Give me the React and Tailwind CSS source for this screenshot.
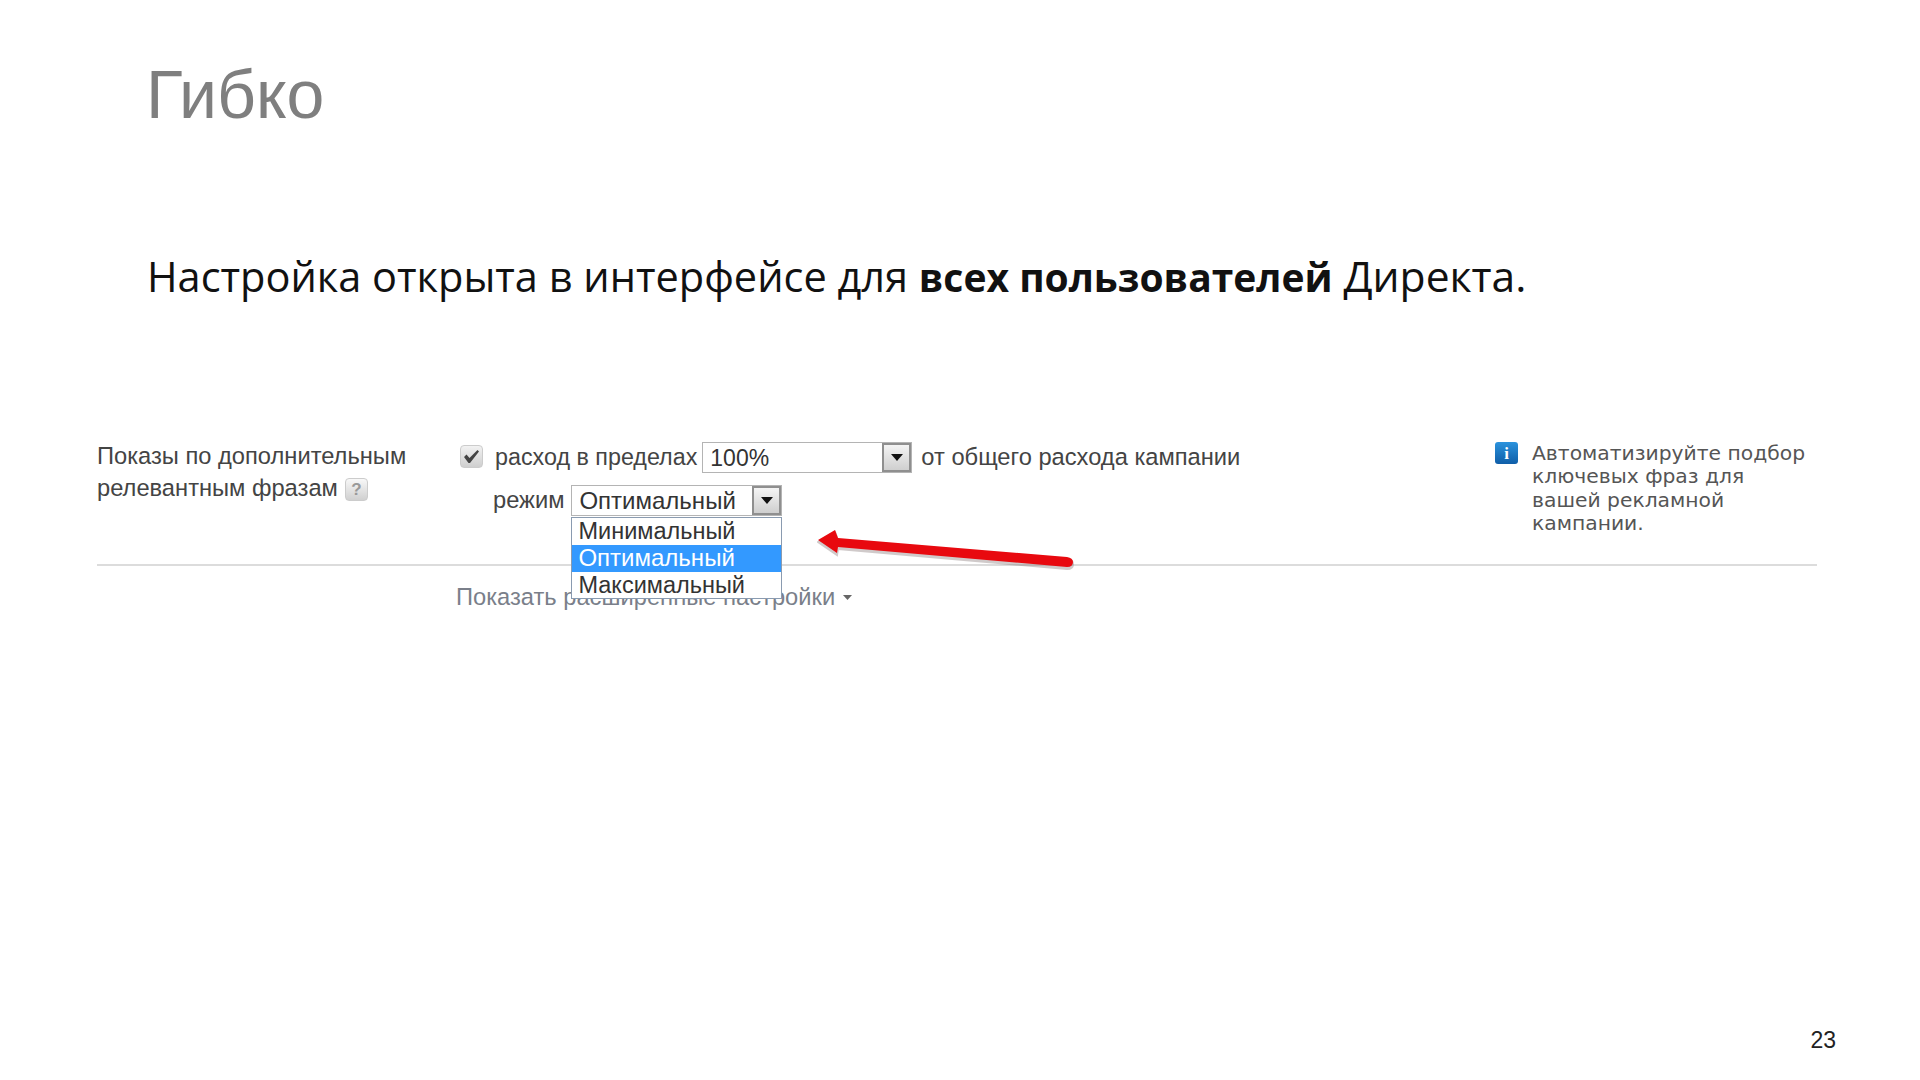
const sans = "font-['Liberation_Sans',Arial,sans-serif]";

function SelectBox({ value, className }) {
    return (
        <div className={`flex h-[31px] items-stretch border border-[#b4b4b4] bg-white text-[#333] ${className}`}>
            <div className="flex-1 pl-[7px] leading-[30px]">{value}</div>
            <div className="flex w-[29px] items-center justify-center border-2 border-[#8f8f8f] bg-gradient-to-b from-[#f4f4f4] to-[#cfcfcf]">
                <svg width="12" height="7" viewBox="0 0 12 7"><path d="M0 0h12L6 7z" fill="#111" /></svg>
            </div>
        </div>
    );
}

function Arrow() {
    return (
        <svg className="absolute left-[246px] top-[43px]" width="262" height="46" viewBox="0 0 262 46">
            <path d="M1 12 L18 2 L21 10 L250 29 Q256 30 256 34 Q256 39 250 39 L21 19 L20 25 Z" fill="#7a6a6a" stroke="#7a6a6a" strokeWidth="2" opacity="0.35" transform="translate(0 2)" />
            <path d="M1 12 L18 2 L21 10 L250 29 Q256 30 256 34 Q256 39 250 39 L21 19 L20 25 Z" fill="#e8090f" />
        </svg>
    );
}

export default function App() {
    return (
        <div className={`flex h-[1080px] w-full flex-col bg-white ${sans}`}>
            {/* Title */}
            <h1 className="pl-[146px] pt-[55px] text-[68px] leading-[78px] text-[#7f7f7f]">Гибко</h1>

            <p className="pl-[147px] pt-[115px] font-['Open_Sans',sans-serif] text-[41.5px] leading-[54px] text-[#111]">
                Настройка открыта в интерфейсе для <b className="text-[39px] font-bold">всех пользователей</b> <span className="text-[42.6px]">Директа.</span>
            </p>

            {/* Settings screenshot */}
            <div className="ml-[97px] mt-[130px] w-[1720px] text-[23.7px] text-[#444]">
                <div className="flex h-[132px] border-b-2 border-[#dcdcdc]">
                    <div className="w-[359px] pt-[6px] leading-[32px]">
                        Показы по дополнительным
                        <br />
                        релевантным фразам
                        <span className="ml-[7px] inline-flex h-[23px] w-[23px] items-center justify-center rounded-[4px] border border-[#ccc] bg-gradient-to-b from-[#f8f8f8] to-[#d0d0d0] align-[1px] text-[17px] font-bold leading-none text-[#999]">?</span>
                    </div>

                    <div className="flex-1 pt-[8px]">
                        <div className="flex h-[31px] items-center">
                            <div className="-mt-[3px] ml-[4px] flex h-[23px] w-[23px] items-center justify-center rounded-[4px] border border-[#ccc] bg-gradient-to-b from-[#f2f2f2] to-[#cfcfcf]">
                                <svg width="17" height="15" viewBox="0 0 17 15"><path d="M1 8l2.5-2.5L6.5 9 14.5 1 16 2.5 7 14h-1.5z" fill="#444" /></svg>
                            </div>
                            <span className="ml-[12px] text-[23.3px]">расход в пределах</span>
                            <SelectBox value="100%" className="ml-[5px] w-[210px] text-[23px]" />
                            <span className="ml-[9px]">от общего расхода кампании</span>
                        </div>

                        <div className="mt-[12px] flex h-[31px] items-center">
                            <span className="ml-[37px]">режим</span>
                            <div className="relative ml-[7px] w-[211px] text-[24px]">
                                <SelectBox value="Оптимальный" />
                                {/* Open dropdown */}
                                <div className="absolute left-0 top-[32px] z-10 h-[82px] w-full border border-[#8a9bb0] bg-white text-[23.5px] leading-[27px] text-[#333]">
                                    <div className="h-[27px] pl-[6px]">Минимальный</div>
                                    <div className="h-[27px] bg-[#3399ff] pl-[6px] text-[24px] leading-[25px] text-white">Оптимальный</div>
                                    <div className="h-[26px] pl-[6px]">Максимальный</div>
                                </div>
                                <Arrow />
                            </div>
                        </div>
                    </div>

                    <div className="flex w-[322px] pt-[8px] font-['DejaVu_Sans',sans-serif] text-[20.3px] leading-[23.3px] text-[#555]">
                        <div className="flex h-[22px] w-[23px] shrink-0 items-center justify-center rounded-[3px] bg-gradient-to-b from-[#2b93dd] to-[#0f5ea8] font-['Liberation_Serif',serif] text-[17px] font-bold leading-none text-white">i</div>
                        <div className="ml-[14px]">
                            Автоматизируйте подбор
                            <br />
                            ключевых фраз для
                            <br />
                            вашей рекламной
                            <br />
                            кампании.
                        </div>
                    </div>
                </div>

                <div className="flex items-center pl-[359px] pt-[15px] leading-[32px] text-[#7a7f8a]">
                    Показать расширенные настройки
                    <svg className="ml-[8px]" width="9" height="5" viewBox="0 0 9 5"><path d="M0 0h9L4.5 5z" fill="#666" /></svg>
                </div>
            </div>

            {/* Page number */}
            <div className="mt-auto flex justify-end pb-[27px] pr-[84px] text-[23px] leading-[26px] text-[#222]">23</div>
        </div>
    );
}
